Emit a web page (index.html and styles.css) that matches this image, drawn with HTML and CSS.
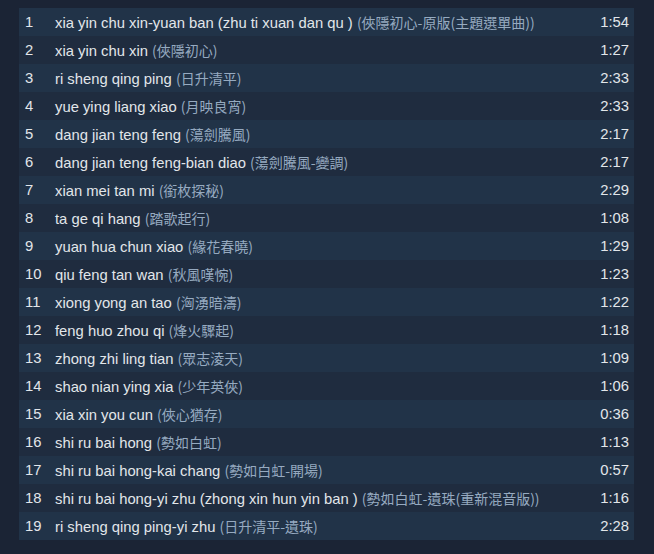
FILE: index.html
```html
<!DOCTYPE html>
<html>
<head>
<meta charset="utf-8">
<link rel="stylesheet" href="styles.css">
</head>
<body>
<div class="tracks">
  <div class="row"><span class="num">1</span><span class="title">xia yin chu xin-yuan ban (zhu ti xuan dan qu ) <span class="alt">(俠隱初心-原版(主題選單曲))</span></span><span class="dur">1:54</span></div>
  <div class="row"><span class="num">2</span><span class="title">xia yin chu xin <span class="alt">(俠隱初心)</span></span><span class="dur">1:27</span></div>
  <div class="row"><span class="num">3</span><span class="title">ri sheng qing ping <span class="alt">(日升清平)</span></span><span class="dur">2:33</span></div>
  <div class="row"><span class="num">4</span><span class="title">yue ying liang xiao <span class="alt">(月映良宵)</span></span><span class="dur">2:33</span></div>
  <div class="row"><span class="num">5</span><span class="title">dang jian teng feng <span class="alt">(蕩劍騰風)</span></span><span class="dur">2:17</span></div>
  <div class="row"><span class="num">6</span><span class="title">dang jian teng feng-bian diao <span class="alt">(蕩劍騰風-變調)</span></span><span class="dur">2:17</span></div>
  <div class="row"><span class="num">7</span><span class="title">xian mei tan mi <span class="alt">(銜枚探秘)</span></span><span class="dur">2:29</span></div>
  <div class="row"><span class="num">8</span><span class="title">ta ge qi hang <span class="alt">(踏歌起行)</span></span><span class="dur">1:08</span></div>
  <div class="row"><span class="num">9</span><span class="title">yuan hua chun xiao <span class="alt">(緣花春曉)</span></span><span class="dur">1:29</span></div>
  <div class="row"><span class="num">10</span><span class="title">qiu feng tan wan <span class="alt">(秋風嘆惋)</span></span><span class="dur">1:23</span></div>
  <div class="row"><span class="num">11</span><span class="title">xiong yong an tao <span class="alt">(洶湧暗濤)</span></span><span class="dur">1:22</span></div>
  <div class="row"><span class="num">12</span><span class="title">feng huo zhou qi <span class="alt">(烽火驟起)</span></span><span class="dur">1:18</span></div>
  <div class="row"><span class="num">13</span><span class="title">zhong zhi ling tian <span class="alt">(眾志淩天)</span></span><span class="dur">1:09</span></div>
  <div class="row"><span class="num">14</span><span class="title">shao nian ying xia <span class="alt">(少年英俠)</span></span><span class="dur">1:06</span></div>
  <div class="row"><span class="num">15</span><span class="title">xia xin you cun <span class="alt">(俠心猶存)</span></span><span class="dur">0:36</span></div>
  <div class="row"><span class="num">16</span><span class="title">shi ru bai hong <span class="alt">(勢如白虹)</span></span><span class="dur">1:13</span></div>
  <div class="row"><span class="num">17</span><span class="title">shi ru bai hong-kai chang <span class="alt">(勢如白虹-開場)</span></span><span class="dur">0:57</span></div>
  <div class="row"><span class="num">18</span><span class="title">shi ru bai hong-yi zhu (zhong xin hun yin ban ) <span class="alt">(勢如白虹-遺珠(重新混音版))</span></span><span class="dur">1:16</span></div>
  <div class="row"><span class="num">19</span><span class="title">ri sheng qing ping-yi zhu <span class="alt">(日升清平-遺珠)</span></span><span class="dur">2:28</span></div>
</div>
</body>
</html>
```

FILE: styles.css
```css
html, body {
  margin: 0;
  padding: 0;
  background: #1b2435;
}
body {
  padding: 8px 0 0 19px;
  font-family: "Liberation Sans", Arial, "Noto Sans CJK TC", sans-serif;
  font-size: 14.8px;
  color: #e2e6ea;
}
.tracks {
  width: 615px;
  display: flex;
  flex-direction: column;
}
.row {
  height: 28px;
  display: flex;
  align-items: center;
  padding: 0 5px 0 6px;
  background: #1f2c3f;
}
.row:nth-child(odd) {
  background: #213348;
}
.num {
  width: 30px;
  flex: none;
}
.title {
  flex: 1;
  white-space: nowrap;
}
.alt {
  color: #96aac0;
  font-family: "Noto Sans CJK TC", "Liberation Sans", sans-serif;
  font-size: 14px;
}
.dur {
  flex: none;
  text-align: right;
}
```
